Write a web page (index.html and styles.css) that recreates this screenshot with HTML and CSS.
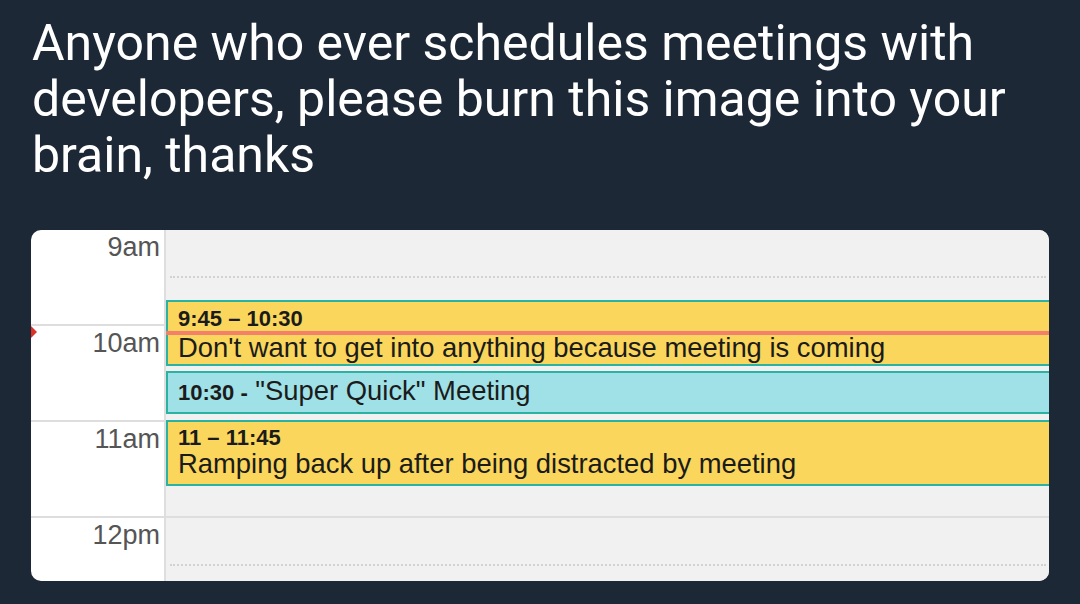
FILE: index.html
```html
<!DOCTYPE html>
<html lang="en">
<head>
<meta charset="utf-8">
<title>Tweet</title>
<link rel="stylesheet" href="styles.css">
</head>
<body>
<main class="page">
  <p class="tweet-text">Anyone who ever schedules meetings with developers, please burn this image into your brain, thanks</p>
  <section class="calendar">
    <div class="rows">
      <div class="row">
        <div class="label">9am</div>
        <div class="cell"><div class="half"></div></div>
      </div>
      <div class="row">
        <div class="label">10am</div>
        <div class="cell"><div class="half"></div></div>
      </div>
      <div class="row">
        <div class="label">11am</div>
        <div class="cell"><div class="half"></div></div>
      </div>
      <div class="row">
        <div class="label">12pm</div>
        <div class="cell"><div class="half"></div></div>
      </div>
    </div>
    <div class="events">
      <div class="event yellow ev1">
        <div class="time">9:45 – 10:30</div>
        <div class="title">Don't want to get into anything because meeting is coming</div>
      </div>
      <div class="event cyan ev2">
        <div class="single"><b class="time-inline">10:30 -</b> "Super Quick" Meeting</div>
      </div>
      <div class="event yellow ev3">
        <div class="time">11 – 11:45</div>
        <div class="title">Ramping back up after being distracted by meeting</div>
      </div>
      <div class="now-line"></div>
    </div>
    <div class="now-marker"></div>
  </section>
</main>
</body>
</html>
```
FILE: styles.css
```css
* { box-sizing: border-box; }
html, body {
  margin: 0;
  padding: 0;
  width: 1080px;
  height: 604px;
  overflow: hidden;
  background: #1c2836;
}
.page {
  padding: 15px 31px 0 31px;
}
.tweet-text {
  margin: 0 0 47px 1px;
  font-family: Roboto, "Liberation Sans", sans-serif;
  font-size: 50px;
  line-height: 56px;
  color: #ffffff;
  width: 1000px;
}
.calendar {
  position: relative;
  width: 1018px;
  height: 351px;
  background: #ffffff;
  border-radius: 10px;
  overflow: hidden;
  font-family: "Liberation Sans", Arial, sans-serif;
}
.rows {
  margin-top: -2px;
}
.row {
  display: grid;
  grid-template-columns: 133px 1fr;
  height: 96px;
  border-top: 2px solid #dedede;
}
.label {
  font-size: 27px;
  line-height: 26px;
  color: #555555;
  text-align: right;
  padding-top: 4px;
  padding-right: 4px;
}
.cell {
  background: #f1f1f1;
  border-left: 2px solid #dedede;
  padding: 46px 3px 0 4px;
}
.half {
  border-top: 2px dotted #d2d2d2;
}
.events {
  position: absolute;
  left: 135px;
  right: 0;
  top: 0;
  bottom: 0;
}
.event {
  position: absolute;
  left: 0;
  right: -12px;
  border: 2px solid #2ab3a2;
  padding: 0 10px;
  color: #1b1b1b;
  white-space: nowrap;
}
.yellow { background: #fad65c; }
.cyan { background: #9fe1e6; }
.ev1 { top: 70px; height: 66px; padding-top: 5px; }
.ev2 { top: 141px; height: 43px; padding-top: 1px; }
.ev3 { top: 190px; height: 66px; padding-top: 4px; }
.time {
  font-weight: bold;
  font-size: 22px;
  line-height: 23px;
}
.title {
  font-size: 27.4px;
  line-height: 28px;
}
.ev1 .title { margin-top: 4px; }
.ev3 .title { margin-top: 1px; }
.single {
  font-size: 27.4px;
  line-height: 34px;
}
.time-inline {
  font-size: 22px;
}
.now-line {
  position: absolute;
  left: 0;
  right: 0;
  top: 101px;
  height: 4px;
  background: #f4806b;
}
.now-marker {
  position: absolute;
  left: 0;
  top: 96px;
  width: 0;
  height: 0;
  border-left: 6px solid #d8322a;
  border-top: 6px solid transparent;
  border-bottom: 6px solid transparent;
}
```
